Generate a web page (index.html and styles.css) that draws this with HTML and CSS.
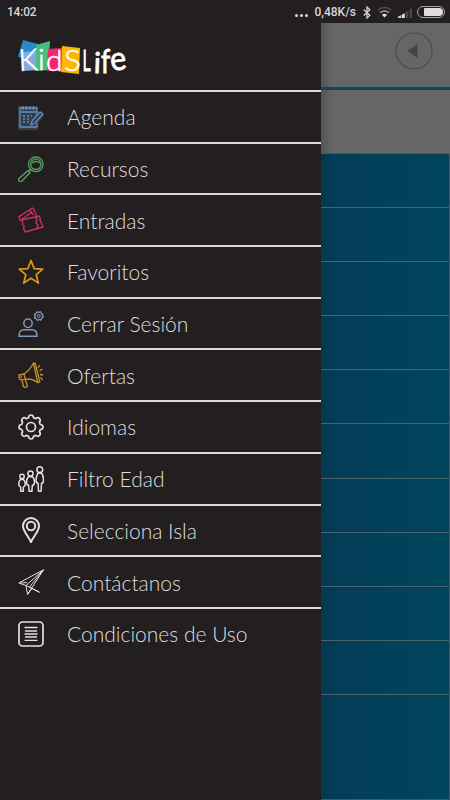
FILE: index.html
```
<!DOCTYPE html>
<html lang="es">
<head>
  <meta charset="UTF-8">
  <title>Kids Life</title>
  <link rel="stylesheet" href="styles.css">
</head>
<body>
  <header class="status">
    <span class="clock">14:02</span>
    <span class="dots"><i></i><i></i><i></i></span>
    <span class="speed">0,48K/s</span>
    <svg class="bluetooth" width="8" height="13" viewBox="0 0 8 13"><path d="M.8 3.6l6 5.6L4 12V1l2.8 2.8-6 5.6" fill="none" stroke="#d4d2d3" stroke-width="1.3"/></svg>
    <svg class="wifi" width="15" height="12" viewBox="0 0 15 12" fill="none" stroke-width="1.5">
      <path d="M.7 4.2a10 10 0 0 1 13.6 0" stroke="#504e4f"/>
      <path d="M3 6.8a6.500 6.500 0 0 1 9 0" stroke="#9b999a"/>
      <path d="M7.5 11.5L4.9 8.700q2.600-2 5.200 0z" fill="#dddbdc"/>
    </svg>
    <svg class="signal" width="15" height="11" viewBox="0 0 15 11">
      <path d="M0 11V9.5l3-1.3V11z" fill="#c9c7c8"/>
      <path d="M3.700 11V8l3-2v5z" fill="#e5e3e4"/>
      <path d="M7.700 11V5l2.600-1.400V11zM11.400 11V2.500L14 1v10z" fill="#484546"/>
    </svg>
    <span class="battery"><i></i></span>
  </header>

  <main class="screen">
    <nav class="drawer">
      <div class="brand">
        <svg width="136" height="68" viewBox="0 0 136 68">
          <path d="M23 17l15 4-2 14-18-1z" fill="#2989c6"/>
          <path d="M22 29l16-1v19l-15 1z" fill="#82acdd"/>
          <path d="M36 22l14-4-2 29-12 1z" fill="#47bd80"/>
          <path d="M48 26l14-1-1 23H47z" fill="#f5266d"/>
          <path d="M62 23l18 2-1 26-18-2z" fill="#ffb600"/>
          <g class="brand-kids">
            <text transform="translate(19 48) rotate(-3)">K</text>
            <text transform="translate(38 47)">i</text>
            <text transform="translate(46 48)">d</text>
            <text transform="translate(64 48) scale(1.05 1)">S</text>
          </g>
          <g class="brand-life">
            <text transform="translate(82.500 48) scale(.55 1)" font-size="29">L</text>
            <text transform="translate(93.500 50) rotate(2)" font-size="29">i</text>
            <text transform="translate(101 50) scale(.82 1)" font-size="32">f</text>
            <text transform="translate(111.500 48) rotate(-8) scale(.92 1)" font-size="33">e</text>
          </g>
        </svg>
      </div>

      <ul class="menu">
        <li>
          <svg class="icon agenda" viewBox="0 0 26 26">
            <path d="M0 2h20v6l3-1 3 4-5 7-1 8H0z" fill="#353e49" stroke="none"/>
            <path d="M19 11V4H2v19h17v-4M2 8h17M5 2v4M8.500 2v4M12 2v4M15.500 2v4M22 8l3 2-8 9-4 2 1-4z"/>
            <path d="M5 12h9M5 15h8M5 18h6" stroke-dasharray="2 2"/>
          </svg>
          <span>Agenda</span>
        </li>
        <li>
          <svg class="icon recursos" viewBox="0 0 26 26">
            <circle cx="17.800" cy="8.300" r="7.300"/><circle cx="17.800" cy="8.300" r="5.200"/>
            <path d="M14 7q3-3 8 0M12.500 13.500l-2 2M10 14.500l2 2-8.500 9q-2 .7-3-1.100Q0 23 1.500 22z"/>
          </svg>
          <span>Recursos</span>
        </li>
        <li>
          <svg class="icon entradas" viewBox="0 0 26 26">
            <path d="M4 13l17-4 1.500 3q-1.500 1 .5 3l2 5-18 5-1.500-4q1.500-2-.5-3zM17 10l2 2-1 4 2 2-1 3M2.500 14L.8 9.600 14.500 1l2 2q-.8 2 1 2.500l.5 4M3 13l11-8M11.500 3l4 5"/>
          </svg>
          <span>Entradas</span>
        </li>
        <li>
          <svg class="icon favoritos" viewBox="0 0 26 26">
            <path d="M13 1.500l3.200 8.200 8.600.5-6.600 5.500 2.200 8.400L13 19.300l-7.400 4.800 2.200-8.400-6.600-5.500 8.600-.5z"/>
          </svg>
          <span>Favoritos</span>
        </li>
        <li>
          <svg class="icon sesion" viewBox="0 0 26 26">
            <circle cx="10" cy="12.200" r="4.200"/>
            <path d="M1 25.300q-.2-6.600 5-6.600h8q5 0 5 6.600z"/>
            <circle cx="20.700" cy="5" r="4.400" stroke-width="1.400" stroke-dasharray="2.200 1.250"/>
            <circle cx="20.700" cy="5" r="3.700" stroke-width="1"/><circle cx="20.700" cy="5" r="1.400" stroke-width="1"/>
          </svg>
          <span>Cerrar Sesión</span>
        </li>
        <li>
          <svg class="icon ofertas" viewBox="0 0 26 26">
            <path d="M1 13l5-1q6-4 9.500-11l1.800.5 4.500 18.500-2 .7Q14 16 7 17.300l-4.500.5q-2-1.500-1.500-4.800zM6 12l1.200 5M15.500 1.200l4.200 19.300M4 18l1.400 6.500q3 2 4-.4L7.500 18M20 6l1.800-3M21.500 9l3-2M22 12.500l3 .5M22.500 15.500l2 2.500M3 14l.5 2"/>
          </svg>
          <span>Ofertas</span>
        </li>
        <li>
          <svg class="icon" viewBox="0 0 26 26">
            <path d="M10.500 3.700Q10.700 1 13 1T15.500 3.700L17.800 4.600Q19.900 2.900 21.500 4.500T21.400 8.200L22.300 10.500Q25 10.700 25 13T22.300 15.500L21.400 17.800Q23.100 19.900 21.500 21.500T17.800 21.400L15.500 22.300Q15.300 25 13 25T10.500 22.300L8.200 21.400Q6.100 23.100 4.500 21.500T4.600 17.800L3.700 15.500Q1 15.300 1 13T3.700 10.500L4.600 8.200Q2.900 6.100 4.500 4.500T8.200 4.600z"/>
            <circle cx="13" cy="13" r="4.500"/>
          </svg>
          <span>Idiomas</span>
        </li>
        <li>
          <svg class="icon edad" viewBox="0 0 26 26">
            <circle cx="4" cy="10.500" r="2.200"/><circle cx="12.500" cy="7.500" r="2.600"/><circle cx="21.800" cy="3.700" r="2.900"/>
            <path d="M2.500 13.500Q0 16 1.200 20l1.500 1v4.200h2.600V21l1.500-1q1.200-4-1.300-6.500zM10.500 10.800Q7.500 14 9 18.500l1.700 1 .4 5.700h2.800l.4-5.700 1.700-1q1.500-4.500-1.500-7.700zM19.800 7.300Q17.300 11.500 18.500 16.500l1.600 1 .4 7.700h2.600l.4-7.700 1.600-1q1.200-5-1.300-9.200z"/>
          </svg>
          <span>Filtro Edad</span>
        </li>
        <li>
          <svg class="icon pin" viewBox="0 0 26 26">
            <path d="M13 25C10.500 19 5 14.500 5 9a8 8 0 0 1 16 0c0 5.500-5.500 10-8 16z"/>
            <circle cx="13" cy="9" r="4.200"/>
          </svg>
          <span>Selecciona Isla</span>
        </li>
        <li>
          <svg class="icon avion" viewBox="0 0 26 26">
            <path d="M25.500.8L.8 14l7.200 2.500zM8 16.500l1.500 9L25.500.8 11.500 18l10 5.300zM9.500 25.500l4.500-6.200M3 14l6-.5"/>
          </svg>
          <span>Contáctanos</span>
        </li>
        <li>
          <svg class="icon" viewBox="0 0 26 26">
            <rect x="1" y="1" width="24" height="24" rx="3.500"/>
            <path d="M6.500 6.500h13M7 10h12M6.500 13h13M7 16h12M6.500 19.300h13" stroke-width="1.300"/>
          </svg>
          <span>Condiciones de Uso</span>
        </li>
      </ul>
    </nav>

    <section class="page">
      <div class="toolbar">
        <svg width="38" height="38" viewBox="0 0 38 38">
          <circle cx="19" cy="19" r="18" fill="none" stroke="#4d4d4d" stroke-width="1.200"/>
          <path d="M12.500 19L22.500 12v14z" fill="#444"/>
        </svg>
      </div>
      <div class="subbar"></div>
      <div class="rows">
        <div></div><div></div><div></div><div></div><div></div>
        <div></div><div></div><div></div><div></div><div></div>
      </div>
    </section>
  </main>
</body>
</html>
```
FILE: styles.css
```
* {
  margin: 0;
  padding: 0;
  box-sizing: border-box;
}
body {
  width: 450px;
  height: 800px;
  display: flex;
  flex-direction: column;
  overflow: hidden;
  background: #231f20;
  font-family: Lato, sans-serif;
}

/* Status bar */
.status {
  height: 23px;
  flex: none;
  display: flex;
  align-items: center;
  padding: 1px 5px 0 7px;
  background: #231f20;
  color: #d8d6d7;
  font-family: Roboto, sans-serif;
  font-size: 12px;
  font-weight: 500;
}
.clock {
  flex: 1;
  letter-spacing: -.2px;
}
.dots {
  display: flex;
  gap: 2px;
  margin: 7px 6px 0 0;
}
.dots i {
  width: 3px;
  height: 3px;
  border-radius: 50%;
  background: #d8d6d7;
}
.bluetooth {
  margin-left: 7px;
}
.wifi {
  margin-left: 6px;
}
.signal {
  margin-left: 6px;
}
.battery {
  width: 28px;
  height: 12px;
  margin-left: 4px;
  padding: 1px;
  border: 1px solid #a5a3a4;
  border-radius: 6px;
  display: flex;
  justify-content: flex-end;
}
.battery i {
  width: 19px;
  background: #dedcdd;
  border-radius: 1px 5px 5px 1px;
}

.screen {
  flex: 1;
  display: flex;
}

/* Side menu */
.drawer {
  width: 321px;
  flex: none;
  background: #231f20;
}
.brand {
  height: 67px;
}
.brand svg {
  display: block;
}
.brand text {
  fill: #fff;
  stroke: #fff;
}
.brand-kids {
  font-size: 30px;
  font-weight: 300;
}
.brand-kids text {
  stroke-width: .6;
}
.brand-life text {
  stroke-width: .8;
}
.menu {
  list-style: none;
}
.menu li {
  height: 51.7px;
  display: flex;
  align-items: center;
  gap: 23px;
  padding-left: 18px;
  border-top: 2px solid #dcdadb;
  color: #dfddde;
  font-size: 21px;
  font-weight: 300;
}
.icon {
  width: 26px;
  height: 26px;
  fill: none;
  stroke: #e2e0e1;
  stroke-width: 1.7;
  stroke-linejoin: round;
}
.agenda {
  stroke: #5d8dc2;
  stroke-width: 1.3;
}
.recursos {
  stroke: #57a562;
  stroke-width: 1.3;
}
.entradas {
  stroke: #ce2f62;
  stroke-width: 1.3;
}
.favoritos {
  stroke: #dc9b12;
}
.sesion {
  stroke: #7d99c0;
  stroke-width: 1.5;
}
.ofertas {
  stroke: #c3902b;
  stroke-width: 1.3;
}
.edad {
  stroke-width: 1.5;
}
.pin {
  stroke-width: 2;
}
.avion {
  stroke-width: 1;
}

/* Dimmed page behind the menu */
.page {
  flex: 1;
  display: flex;
  flex-direction: column;
  background: linear-gradient(90deg, #555 0, #666 12px);
}
.toolbar {
  height: 67px;
  padding: 9px 17px 0 0;
  text-align: right;
  border-bottom: 3px solid #034c58;
}
.subbar {
  height: 64px;
  border-bottom: 1px solid #50585c;
}
.rows {
  flex: 1;
  background: linear-gradient(90deg, #05374c 0, #033d57 14px, #00455c 100%);
  border-right: 1px solid #3d5a67;
  border-bottom: 1px solid #3d5a67;
}
.rows div {
  height: 54.1px;
  border-bottom: 1px solid #4a6570;
}
```
